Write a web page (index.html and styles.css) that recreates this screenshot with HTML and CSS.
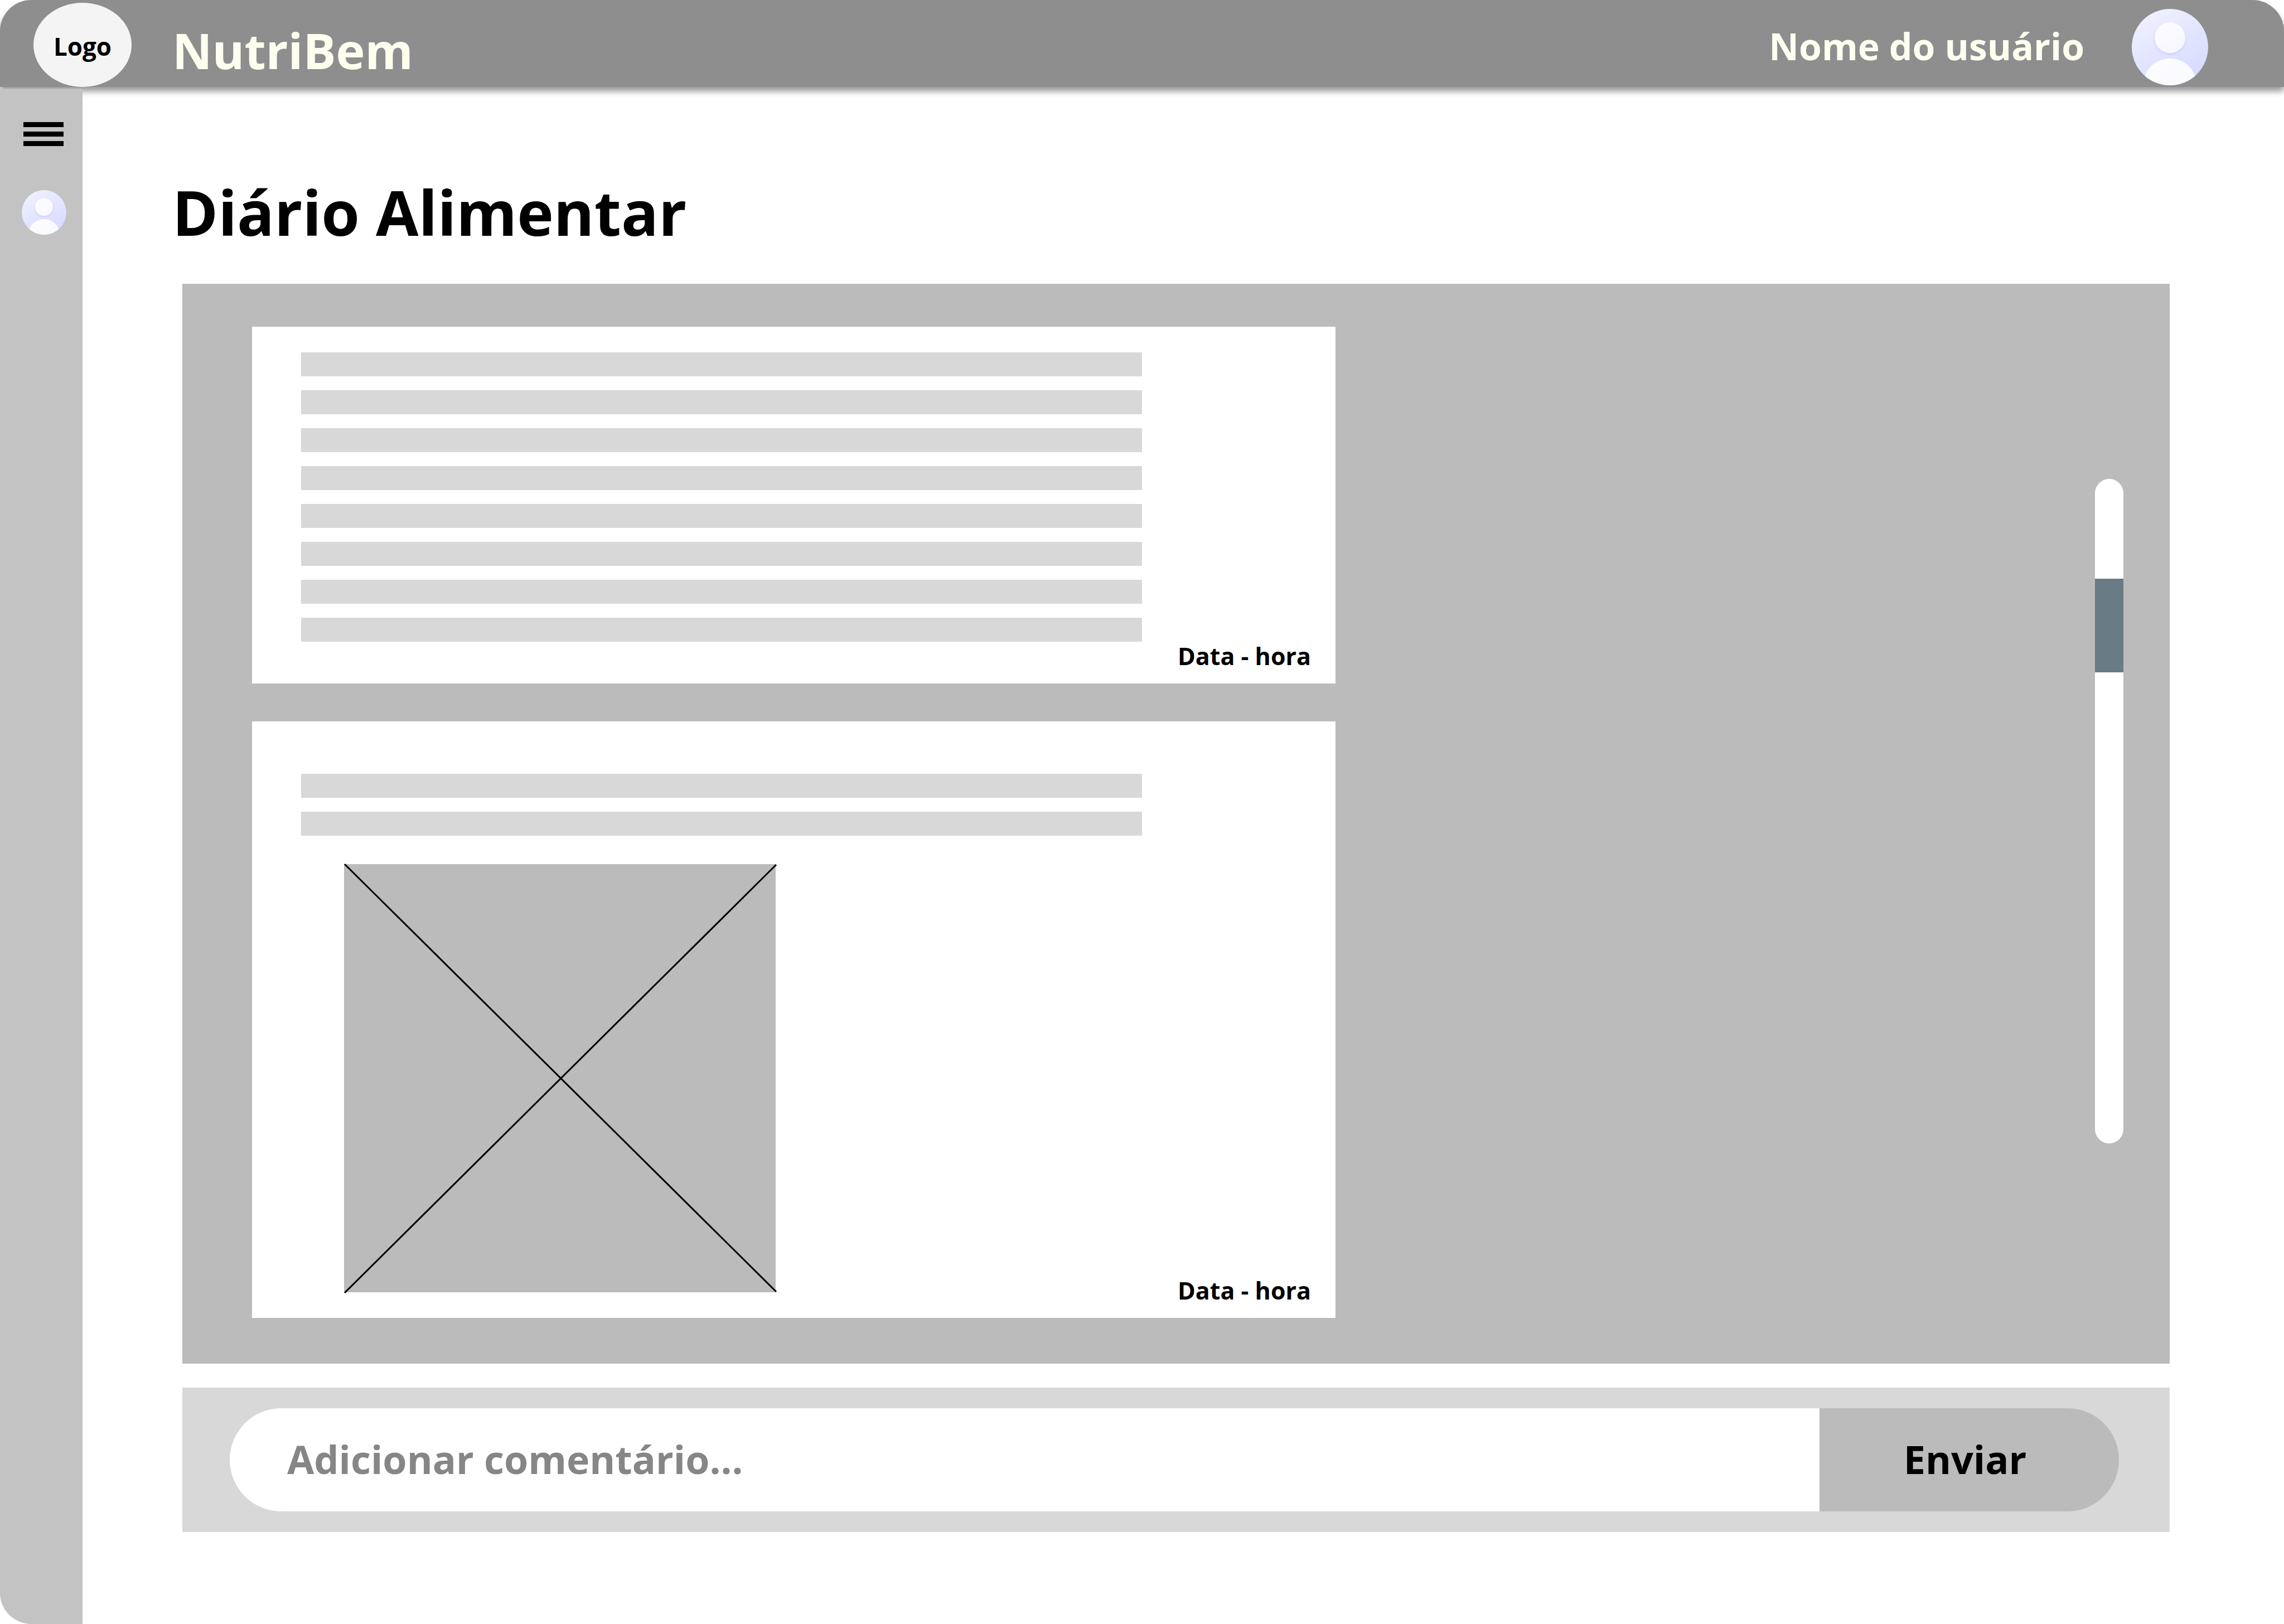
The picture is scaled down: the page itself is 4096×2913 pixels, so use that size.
FILE: index.html
```html
<!DOCTYPE html>
<html lang="pt-BR">
<head>
  <meta charset="utf-8">
  <meta name="viewport" content="width=device-width, initial-scale=1">
  <title>NutriBem - Diário Alimentar</title>
  <link rel="stylesheet" href="styles.css">
</head>
<body>
  <svg class="defs" aria-hidden="true">
    <defs>
      <linearGradient id="avatar-bg" x1="0.2" y1="0" x2="0.8" y2="1">
        <stop offset="0" stop-color="#f0f1ff"/>
        <stop offset="1" stop-color="#d5d9ff"/>
      </linearGradient>
      <linearGradient id="avatar-fg" x1="0.2" y1="0" x2="0.8" y2="1">
        <stop offset="0" stop-color="#fdfdff"/>
        <stop offset="1" stop-color="#f6f7ff"/>
      </linearGradient>
      <clipPath id="avatar-clip"><circle cx="24" cy="24" r="24"/></clipPath>
      <filter id="avatar-shadow" x="-50%" y="-50%" width="200%" height="200%">
        <feDropShadow dx="0" dy="1" stdDeviation="1" flood-color="#b5bbff" flood-opacity=".5"/>
      </filter>
      <symbol id="avatar" viewBox="0 0 48 48">
        <g clip-path="url(#avatar-clip)">
          <rect width="48" height="48" fill="url(#avatar-bg)"/>
          <circle cx="24" cy="18.1" r="9.6" fill="url(#avatar-fg)" filter="url(#avatar-shadow)"/>
          <circle cx="24" cy="48.2" r="17" fill="url(#avatar-fg)"/>
        </g>
      </symbol>
    </defs>
  </svg>

  <header class="topbar">
    <a class="logo" href="#">Logo</a>
    <span class="brand">NutriBem</span>
    <div class="user">
      <span class="user-name">Nome do usuário</span>
      <svg class="user-avatar" role="img" aria-label="Foto do usuário"><use href="#avatar"/></svg>
    </div>
  </header>

  <div class="layout">
    <nav class="sidebar" aria-label="Menu principal">
      <button class="menu-button" type="button" aria-label="Abrir menu">
        <span class="menu-bar"></span>
        <span class="menu-bar"></span>
        <span class="menu-bar"></span>
      </button>
      <a class="sidebar-link" href="#" aria-label="Perfil">
        <svg class="sidebar-avatar" aria-hidden="true"><use href="#avatar"/></svg>
      </a>
    </nav>

    <main class="content">
      <h1 class="title">Diário Alimentar</h1>

      <section class="diary" aria-label="Registros">
        <div class="entries">
          <article class="entry">
            <div class="lines">
              <div class="line"></div>
              <div class="line"></div>
              <div class="line"></div>
              <div class="line"></div>
              <div class="line"></div>
              <div class="line"></div>
              <div class="line"></div>
              <div class="line"></div>
            </div>
            <div class="entry-footer">
              <time class="entry-time">Data - hora</time>
            </div>
          </article>

          <article class="entry entry-with-photo">
            <div class="lines">
              <div class="line"></div>
              <div class="line"></div>
            </div>
            <div class="entry-footer">
              <svg class="photo" viewBox="0 0 774 768" role="img" aria-label="Foto da refeição">
                <rect width="774" height="768" fill="#bbbbbb"/>
                <path d="M1 0L775 767M1 769L775 1" stroke="#000" stroke-width="3"/>
              </svg>
              <time class="entry-time">Data - hora</time>
            </div>
          </article>
        </div>

        <div class="scroll-track">
          <div class="scroll-thumb"></div>
        </div>
      </section>

      <form class="composer">
        <input class="comment" type="text" placeholder="Adicionar comentário..." aria-label="Adicionar comentário">
        <button class="send" type="submit">Enviar</button>
      </form>
    </main>
  </div>
</body>
</html>
```

FILE: styles.css
```css
* {
  box-sizing: border-box;
}

body {
  margin: 0;
  min-height: 100vh;
  display: flex;
  flex-direction: column;
  background: #ffffff;
  color: #000000;
  font-family: "Open Sans", "Noto Sans", sans-serif;
  font-weight: 700;
}

.defs {
  position: absolute;
  width: 0;
  height: 0;
}

/* Top bar */

.topbar {
  display: flex;
  align-items: center;
  padding: 5px 136px 0 60px;
  background: #8e8e8e;
  border-radius: 56px 56px 0 0;
  box-shadow: 0 8px 11px rgba(0, 0, 0, 0.4);
  color: #fffff0;
}

.logo {
  display: flex;
  align-items: center;
  justify-content: center;
  width: 176px;
  height: 151px;
  padding-top: 5px;
  border-radius: 50%;
  background: #f4f4f4;
  color: #000000;
  font-size: 44px;
  text-decoration: none;
}

.brand {
  margin-left: 73px;
  padding-top: 18px;
  font-size: 88px;
  line-height: 120px;
}

.user {
  display: flex;
  align-items: center;
  gap: 85px;
  margin-left: auto;
}

.user-name {
  padding-top: 2px;
  font-size: 66px;
  line-height: 90px;
}

.user-avatar {
  width: 137px;
  height: 137px;
  margin-top: 8px;
}

/* Page frame */

.layout {
  display: flex;
  flex: 1;
  margin-top: 3px;
}

.sidebar {
  display: flex;
  flex-direction: column;
  align-items: flex-start;
  flex: none;
  gap: 79px;
  width: 148px;
  padding: 60px 0 0 39px;
  border-bottom-left-radius: 56px;
  background: #c3c3c3;
}

.menu-button {
  display: flex;
  flex-direction: column;
  gap: 8px;
  width: 78px;
  padding: 0 3px;
  border: 0;
  background: none;
  cursor: pointer;
}

.menu-bar {
  width: 72px;
  height: 9px;
  background: #000000;
}

.sidebar-link,
.sidebar-avatar {
  display: block;
  width: 80px;
  height: 80px;
}

.content {
  flex: 1;
  min-width: 0;
  padding: 146px 205px 165px 179px;
}

.title {
  margin: 0 0 54px -18px;
  font-size: 111px;
  line-height: 150px;
}

/* Diary panel */

.diary {
  display: flex;
  justify-content: space-between;
  padding: 77px 83px 82px 125px;
  background: #bbbbbb;
}

.entries {
  display: flex;
  flex-direction: column;
  flex: 0 1 1943px;
  gap: 68px;
}

.entry {
  padding: 46px 44px 24px 88px;
  background: #ffffff;
}

.entry-with-photo {
  padding-top: 94px;
}

.lines {
  display: flex;
  flex-direction: column;
  gap: 25px;
  max-width: 1508px;
}

.line {
  height: 43px;
  background: #d8d8d8;
}

.entry-footer {
  display: flex;
  align-items: flex-end;
}

.photo {
  width: 774px;
  height: 768px;
  margin: 51px 0 22px 77px;
  overflow: visible;
}

.entry-time {
  margin-left: auto;
  font-size: 43px;
  line-height: 51px;
}

.scroll-track {
  width: 51px;
  height: 1192px;
  margin-top: 273px;
  padding-top: 179px;
  border-radius: 26px;
  background: #ffffff;
}

.scroll-thumb {
  height: 168px;
  background: #697b85;
}

/* Comment form */

.composer {
  display: flex;
  margin-top: 43px;
  padding: 37px 91px 37px 85px;
  background: #d8d8d8;
}

.comment,
.send {
  height: 185px;
  padding: 0 0 4px;
  border: 0;
  font: inherit;
  font-size: 70px;
}

.comment {
  flex: 1;
  min-width: 0;
  padding-left: 103px;
  border-radius: 93px 0 0 93px;
  background: #ffffff;
  color: #000000;
}

.comment::placeholder {
  color: #868686;
  opacity: 1;
}

.send {
  width: 537px;
  padding-right: 15px;
  border-radius: 0 93px 93px 0;
  background: #bbbbbb;
  color: #000000;
  cursor: pointer;
}
```
